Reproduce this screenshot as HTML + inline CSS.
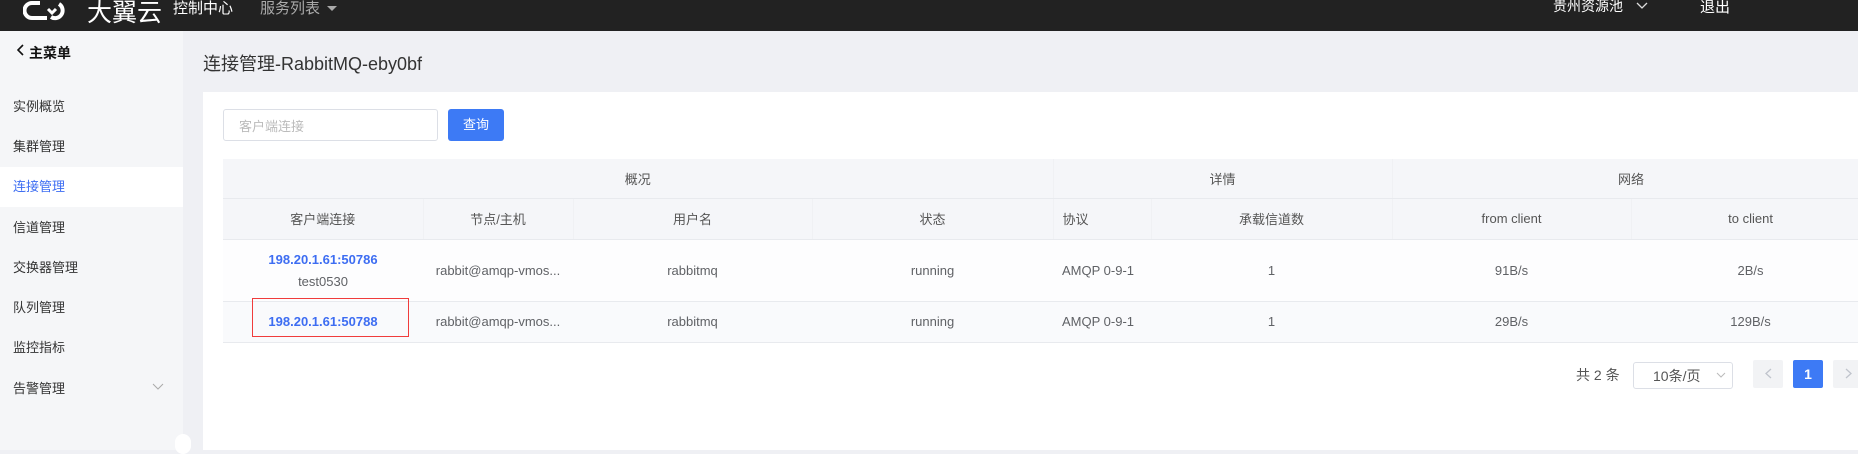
<!DOCTYPE html>
<html><head><meta charset="utf-8"><style>
*{margin:0;padding:0;box-sizing:border-box}
body{width:1858px;height:450px;overflow:hidden;background:#eff0f4;font-family:"Liberation Sans","Noto Sans CJK SC",sans-serif;position:relative;color:#606266}
.a{position:absolute;white-space:nowrap}
#hd{position:absolute;left:0;top:0;width:1858px;height:31px;background:#222}
#sb{position:absolute;left:0;top:31px;width:183px;height:419px;background:#f5f6f8}
.mi{position:absolute;left:13px;font-size:13px;color:#333;line-height:16px}
#card{position:absolute;left:203px;top:92px;width:1655px;height:358px;background:#fff}
table{position:absolute;left:223px;top:159px;border-collapse:collapse;table-layout:fixed;width:1647px;font-size:13px}
td,th{text-align:center;font-weight:normal;border-bottom:1px solid #e8eaee;padding:0}
th{background:#f5f6f9;color:#555;border-right:1px solid #f0f1f4}
.lk{color:#3d6df2;font-weight:bold}
</style></head><body>
<div id="hd">
 <svg class="a" style="left:23px;top:0" width="56" height="22" viewBox="0 0 56 22"><path d="M17 3 H9 A7 7 0 0 0 9 18 H24" fill="none" stroke="#fff" stroke-width="4"/><path d="M36 4 A7.5 7.5 0 1 1 28 17" fill="none" stroke="#fff" stroke-width="4"/><path d="M25 9 l4 4 l4 -4" fill="none" stroke="#fff" stroke-width="3"/></svg>
 <div class="a" style="left:87px;top:-7px;font-size:25px;color:#fff">大翼云</div>
 <div class="a" style="left:173px;top:-3px;font-size:15px;color:#fff">控制中心</div>
 <div class="a" style="left:260px;top:-3px;font-size:15px;color:#aaa">服务列表</div>
 <div class="a" style="left:327px;top:6px;width:0;height:0;border-left:5px solid transparent;border-right:5px solid transparent;border-top:5px solid #aaa"></div>
 <div class="a" style="left:1553px;top:-4px;font-size:14px;color:#fff">贵州资源池</div>
 <svg class="a" style="left:1636px;top:2px" width="12" height="8"><path d="M1 1 L6 6 L11 1" fill="none" stroke="#ddd" stroke-width="1.3"/></svg>
 <div class="a" style="left:1700px;top:-4px;font-size:15px;color:#fff">退出</div>
</div>
<div id="sb">
 <svg class="a" style="left:17px;top:13px" width="8" height="12"><path d="M6 1 L1 6 L6 11" fill="none" stroke="#111" stroke-width="1.6"/></svg>
 <div class="a" style="left:29px;top:12px;font-size:14px;font-weight:bold;color:#111">主菜单</div>
 <div class="a" style="left:0;top:136px;width:183px;height:40px;background:#fff"></div>
 <div class="mi" style="top:68px">实例概览</div>
 <div class="mi" style="top:108px">集群管理</div>
 <div class="mi" style="top:148px;color:#3d6df2">连接管理</div>
 <div class="mi" style="top:189px">信道管理</div>
 <div class="mi" style="top:229px">交换器管理</div>
 <div class="mi" style="top:269px">队列管理</div>
 <div class="mi" style="top:309px">监控指标</div>
 <div class="mi" style="top:350px">告警管理</div>
 <svg class="a" style="left:152px;top:352px" width="12" height="8"><path d="M1 1 L6 6 L11 1" fill="none" stroke="#aaa" stroke-width="1"/></svg>
 <div class="a" style="left:175px;top:403px;width:16px;height:20px;border-radius:8px;background:#fff"></div>
</div>
<div class="a" style="left:203px;top:50px;font-size:18px;color:#333">连接管理-RabbitMQ-eby0bf</div>
<div id="card"></div>
<div class="a" style="left:223px;top:109px;width:215px;height:32px;border:1px solid #dcdfe6;border-radius:3px"></div>
<div class="a" style="left:239px;top:116px;font-size:13px;color:#bbb">客户端连接</div>
<div class="a" style="left:448px;top:109px;width:56px;height:32px;background:#3d7af5;border-radius:3px;color:#fff;font-size:13px;text-align:center;line-height:32px">查询</div>
<table>
<colgroup><col style="width:200px"><col style="width:150px"><col style="width:239px"><col style="width:241px"><col style="width:98px"><col style="width:241px"><col style="width:239px"><col style="width:239px"></colgroup>
<tr style="height:39px"><th colspan="4">概况</th><th colspan="2">详情</th><th colspan="2">网络</th></tr>
<tr style="height:41px"><th>客户端连接</th><th>节点/主机</th><th>用户名</th><th>状态</th><th style="text-align:left;padding-left:9px">协议</th><th>承载信道数</th><th>from client</th><th>to client</th></tr>
<tr style="height:62px;background:#fdfdfe"><td><div class="lk">198.20.1.61:50786</div><div style="margin-top:7px">test0530</div></td><td>rabbit@amqp-vmos...</td><td>rabbitmq</td><td>running</td><td style="text-align:left;padding-left:9px">AMQP 0-9-1</td><td>1</td><td>91B/s</td><td>2B/s</td></tr>
<tr style="height:41px;background:#f9fafc"><td class="lk">198.20.1.61:50788</td><td>rabbit@amqp-vmos...</td><td>rabbitmq</td><td>running</td><td style="text-align:left;padding-left:9px">AMQP 0-9-1</td><td>1</td><td>29B/s</td><td>129B/s</td></tr>
</table>
<div class="a" style="left:252px;top:298px;width:157px;height:39px;border:1px solid #f03c3c"></div>
<div class="a" style="left:1576px;top:365px;font-size:14px;color:#555">共 2 条</div>
<div class="a" style="left:1633px;top:362px;width:100px;height:27px;border:1px solid #dcdfe6;border-radius:3px"></div>
<div class="a" style="left:1653px;top:366px;font-size:14px;color:#555">10条/页</div>
<svg class="a" style="left:1716px;top:372px" width="10" height="7"><path d="M1 1 L5 5 L9 1" fill="none" stroke="#bbb" stroke-width="1"/></svg>
<div class="a" style="left:1753px;top:360px;width:30px;height:28px;background:#f2f3f5;border-radius:2px"></div>
<svg class="a" style="left:1765px;top:368px" width="7" height="11"><path d="M6 1 L1 5.5 L6 10" fill="none" stroke="#c0c4cc" stroke-width="1.3"/></svg>
<div class="a" style="left:1793px;top:360px;width:30px;height:28px;background:#3d7af5;border-radius:2px;color:#fff;font-weight:bold;font-size:14px;text-align:center;line-height:28px">1</div>
<div class="a" style="left:1833px;top:360px;width:30px;height:28px;background:#f2f3f5;border-radius:2px"></div>
<svg class="a" style="left:1845px;top:368px" width="7" height="11"><path d="M1 1 L6 5.5 L1 10" fill="none" stroke="#c0c4cc" stroke-width="1.3"/></svg>
</body></html>
